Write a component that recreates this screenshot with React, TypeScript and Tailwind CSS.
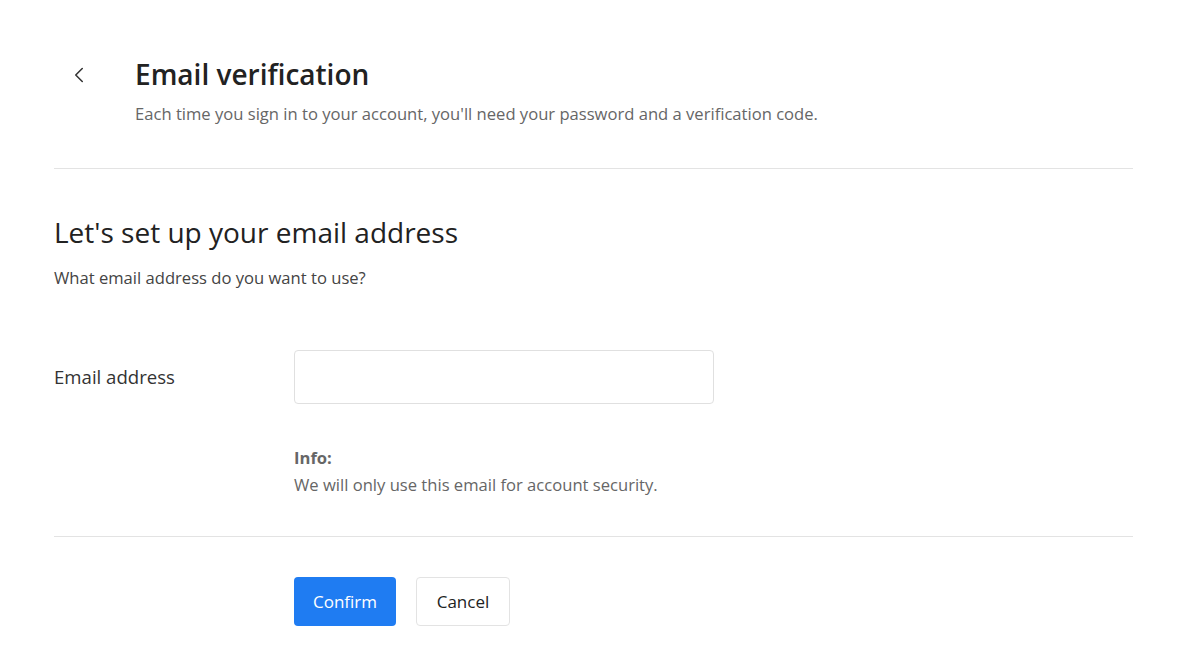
import { ChevronLeft } from 'lucide-react';

export default function App() {
  return (
    <div
      className="min-h-screen bg-white text-[#222]"
      style={{ fontFamily: '"Open Sans", "Noto Sans", sans-serif' }}
    >
      <div className="ml-[54px] mr-[48px] pt-[54px]">
        <div className="flex">
          <div className="w-[81px] pt-[8px] pl-[12px]">
            <ChevronLeft className="w-[26px] h-[26px] text-[#333]" strokeWidth={1.4} />
          </div>
          <div>
            <h1 className="text-[28px] leading-[40px] font-semibold text-[#222]">Email verification</h1>
            <p className="mt-[6px] text-[16.6px] leading-[28px] text-[#666]">
              Each time you sign in to your account, you'll need your password and a verification code.
            </p>
          </div>
        </div>

        <div className="mt-[40px] border-t border-[#e3e3e3]" />

        <h2 className="mt-[43px] text-[28px] leading-[40px] text-[#222]">Let's set up your email address</h2>
        <p className="mt-[13px] text-[16.6px] leading-[26px] text-[#444]">What email address do you want to use?</p>

        <div className="mt-[59px] flex items-center">
          <label className="w-[240px] text-[18.6px] text-[#333]">Email address</label>
          <input
            type="email"
            className="w-[420px] h-[54px] border border-[#e0e0e0] rounded-[4px] px-3 outline-none"
          />
        </div>

        <div className="ml-[240px] mt-[40px] text-[16.6px] leading-[27px] text-[#666]">
          <div className="font-bold">Info:</div>
          <div>We will only use this email for account security.</div>
        </div>

        <div className="mt-[38px] border-t border-[#e3e3e3]" />

        <div className="ml-[240px] mt-[40px] flex gap-[20px]">
          <button className="w-[102px] h-[49px] rounded-[4px] bg-[#1f7cf2] text-white text-[17px]">Confirm</button>
          <button className="w-[94px] h-[49px] rounded-[4px] border border-[#e3e3e3] bg-white text-[#222] text-[17px]">
            Cancel
          </button>
        </div>
      </div>
    </div>
  );
}
